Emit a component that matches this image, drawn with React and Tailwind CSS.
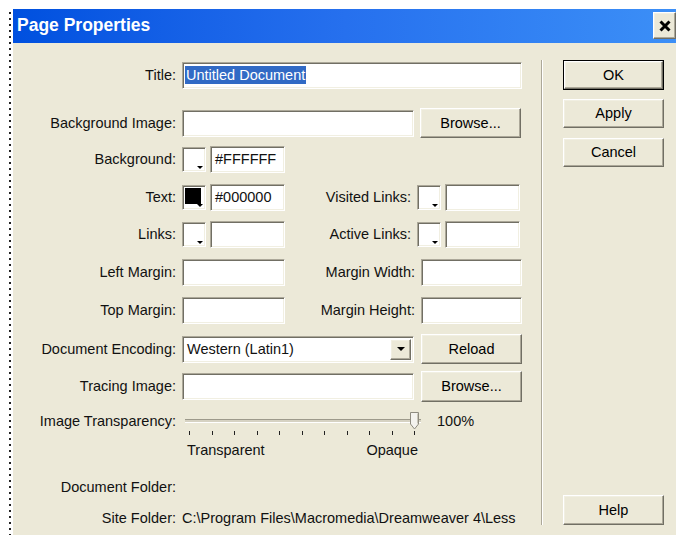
import { useState } from "react";

const FONT = "font-['Liberation_Sans',Arial,sans-serif]";

// classic 3D borders
const sunken =
  "bg-white border border-t-[#aca899] border-l-[#aca899] border-r-white border-b-white shadow-[inset_1px_1px_0_#716f64,inset_-1px_-1px_0_#f1efe2]";
const raised =
  "bg-[#ece9d8] border border-t-white border-l-white border-r-[#716f64] border-b-[#716f64] shadow-[inset_-1px_-1px_0_#aca899,inset_1px_1px_0_#f1efe2]";

const Field = ({ className = "", children }) => (
  <div className={`${sunken} h-[27px] flex items-center px-[4px] ${className}`}>{children}</div>
);

const Button = ({ children, className = "", isDefault }) => (
  <div className={`${isDefault ? "border border-black" : ""} ${className}`}>
    <button className={`${raised} w-full h-full flex items-center justify-center text-black`}>
      {children}
    </button>
  </div>
);

const Swatch = ({ color }) => (
  <div className={`${sunken} relative w-[24px] h-[25px] ${color ? "" : "bg-[#ece9d8]"}`}>
    {color && <div className="absolute left-[2px] top-[2px] w-[16px] h-[16px]" style={{ background: color }} />}
    <span className="absolute right-[2px] bottom-[2px] w-0 h-0 border-l-[3px] border-r-[3px] border-t-[3px] border-l-transparent border-r-transparent border-t-black" />
  </div>
);

const Label = ({ children, className = "w-[169px]" }) => (
  <span className={`${className} text-right pr-[6px] shrink-0`}>{children}</span>
);

const Row = ({ className = "", children }) => (
  <div className={`flex items-center ${className}`}>{children}</div>
);

export default function App() {
  const [alpha] = useState(100);
  const ticks = Array.from({ length: 11 });

  return (
    <div className={`w-[676px] h-[535px] bg-white flex overflow-hidden text-[14.5px] leading-none text-[#111] ${FONT}`}>
      {/* dotted guide on the left */}
      <div className="w-[13px] shrink-0 pt-[12px] flex justify-end pr-[2px]">
        <div className="w-[2px] h-full bg-[linear-gradient(to_bottom,#222_2px,transparent_2px)] bg-[length:2px_6px] bg-repeat-y" />
      </div>

      <div className="flex-1 flex flex-col pt-[9px] min-h-0">
        {/* title bar */}
        <div className="h-[34px] shrink-0 bg-linear-to-r from-[#0050df] via-[#2670ee] to-[#3c8ff7] flex items-start justify-between">
          <span className="pl-[4px] pt-[8px] text-white font-bold text-[17.5px]">Page Properties</span>
          <button className={`${raised} mt-[3px] w-[23px] h-[27px] flex items-center justify-center`}>
            <svg width="12" height="12" viewBox="0 0 12 12">
              <path d="M1.5 1.5 L10.5 10.5 M10.5 1.5 L1.5 10.5" stroke="#000" strokeWidth="3" />
            </svg>
          </button>
        </div>

        {/* dialog body */}
        <div className="flex-1 min-h-0 bg-[#ece9d8] flex">
          <div className="w-[528px] shrink-0 flex flex-col pt-[19px]">
            <Row className="h-[26px]">
              <Label>Title:</Label>
              <Field className="w-[340px] h-[26px] !px-[2px]">
                <span className="bg-[#316ac5] text-white px-[1px] py-[2px]">Untitled Document</span>
              </Field>
            </Row>

            <Row className="h-[30px] mt-[20px]">
              <Label>Background Image:</Label>
              <Field className="w-[232px] h-[25px]" />
              <Button className="w-[101px] h-[30px] ml-[6px]">Browse...</Button>
            </Row>

            <Row className="h-[27px] mt-[8px]">
              <Label>Background:</Label>
              <Swatch color="#ffffff" />
              <Field className="w-[75px] ml-[4px]">#FFFFFF</Field>
            </Row>

            <Row className="h-[27px] mt-[11px]">
              <Label>Text:</Label>
              <Swatch color="#000000" />
              <Field className="w-[75px] ml-[4px]">#000000</Field>
              <Label className="w-[132px]">Visited Links:</Label>
              <Swatch />
              <Field className="w-[75px] ml-[4px]" />
            </Row>

            <Row className="h-[27px] mt-[10px]">
              <Label>Links:</Label>
              <Swatch />
              <Field className="w-[75px] ml-[4px]" />
              <Label className="w-[132px]">Active Links:</Label>
              <Swatch />
              <Field className="w-[75px] ml-[4px]" />
            </Row>

            <Row className="h-[27px] mt-[11px]">
              <Label>Left Margin:</Label>
              <Field className="w-[103px]" />
              <Label className="w-[136px]">Margin Width:</Label>
              <Field className="w-[101px]" />
            </Row>

            <Row className="h-[27px] mt-[11px]">
              <Label>Top Margin:</Label>
              <Field className="w-[103px]" />
              <Label className="w-[136px]">Margin Height:</Label>
              <Field className="w-[101px]" />
            </Row>

            <Row className="h-[30px] mt-[10px]">
              <Label>Document Encoding:</Label>
              <Field className="w-[232px] !pr-[2px] justify-between">
                <span>Western (Latin1)</span>
                <span className={`${raised} w-[21px] h-[21px] flex items-center justify-center`}>
                  <span className="w-0 h-0 border-l-[4px] border-r-[4px] border-t-[4px] border-l-transparent border-r-transparent border-t-black" />
                </span>
              </Field>
              <Button className="w-[101px] h-[30px] ml-[7px]">Reload</Button>
            </Row>

            <Row className="h-[31px] mt-[7px]">
              <Label>Tracing Image:</Label>
              <Field className="w-[232px] h-[26px]" />
              <Button className="w-[101px] h-[31px] ml-[7px]">Browse...</Button>
            </Row>

            {/* transparency slider */}
            <Row className="h-[18px] mt-[10px]">
              <Label>Image Transparency:</Label>
              <div className="relative w-[236px] h-[18px] ml-[3px] flex items-center">
                <div className="w-full h-[4px] border-t border-t-[#9d9a8b] bg-[#d6d2c2] border-b border-b-white" />
                <svg className="absolute right-[2px] top-0" width="9" height="18" viewBox="0 0 9 18">
                  <path d="M0.5 0.5 H8.5 V12 L4.5 17 L0.5 12 Z" fill="#f4f3ee" stroke="#8f8c80" />
                  <path d="M7.5 1.5 V11.5" stroke="#c9c6b8" />
                </svg>
              </div>
              <span className="ml-[16px]">{alpha}%</span>
            </Row>
            <div className="ml-[176px] w-[226px] h-[4px] flex justify-between mt-px">
              {ticks.map((_, i) => (
                <span key={i} className="w-px h-[4px] bg-[#222]" />
              ))}
            </div>
            <div className="ml-[174px] w-[231px] h-[15px] flex justify-between mt-[8px]">
              <span>Transparent</span>
              <span>Opaque</span>
            </div>

            <Row className="h-[15px] mt-[22px]">
              <Label>Document Folder:</Label>
            </Row>
            <Row className="h-[15px] mt-[16px]">
              <Label>Site Folder:</Label>
              <span className="whitespace-nowrap">C:\Program Files\Macromedia\Dreamweaver 4\Less</span>
            </Row>
          </div>

          {/* separator */}
          <div className="mt-[17px] h-[465px] w-[2px] border-l border-l-[#aca899] border-r border-r-white" />

          {/* command buttons */}
          <div className="ml-[20px] w-[101px] flex flex-col pt-[17px] pb-[10px]">
            <Button isDefault className="h-[30px]">OK</Button>
            <Button className="h-[29px] mt-[9px]">Apply</Button>
            <Button className="h-[29px] mt-[10px]">Cancel</Button>
            <Button className="h-[30px] mt-auto">Help</Button>
          </div>
        </div>
      </div>
    </div>
  );
}
